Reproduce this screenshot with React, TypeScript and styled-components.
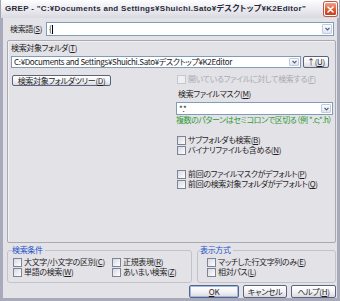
import React from "react";
import styled, { createGlobalStyle } from "styled-components";

const FONT = `"Noto Sans CJK JP", "Noto Sans", sans-serif`;

const Global = createGlobalStyle`
  html, body { margin: 0; padding: 0; background: #e3e2e7; }
  body { font-family: ${FONT}; font-size: 8px; line-height: 10px; color: #1e1e26; }
  * { box-sizing: border-box; }
`;

const Window = styled.div`
  width: 340px;
  height: 301px;
  display: flex;
  flex-direction: column;
  overflow: hidden;
  background: #e3e2e7;
  font-feature-settings: "palt" 1;
  letter-spacing: -0.35px;
`;

const TitleBar = styled.div`
  height: 18px;
  flex: none;
  display: flex;
  align-items: center;
  padding: 0 2px 0 4px;
  background: linear-gradient(#fdfdfe, #eeeef3 45%, #d9d9e1);
  border-left: 1px solid #a4a4b8;
  border-right: 1px solid #a4a4b8;
`;

const TitleText = styled.div`
  flex: 1;
  font-family: "Liberation Sans", "Noto Sans CJK JP", sans-serif;
  font-weight: bold;
  font-size: 8px;
  letter-spacing: 0.3px;
  color: #2a2a38;
  white-space: nowrap;
  overflow: hidden;
`;

const CloseButton = styled.div`
  width: 13px;
  height: 14px;
  flex: none;
  border-radius: 2px;
  border: 1px solid #fff;
  box-shadow: 0 0 0 1px #b85a4a;
  background: linear-gradient(#f2a28c, #dd5a34 55%, #c8401c);
  display: flex;
  align-items: center;
  justify-content: center;
`;

const Frame = styled.div`
  flex: 1;
  display: flex;
  flex-direction: column;
  border: 3px solid #a9a9bc;
  border-top: none;
  padding: 4px 1px 0 4px;
`;

const Acc = styled.span`
  text-decoration: underline;
  text-underline-offset: 1px;
`;

const SearchRow = styled.div`
  height: 14px;
  display: flex;
  align-items: center;
  padding-left: 3px;
`;

const SearchLabel = styled.div`
  width: 36px;
  flex: none;
  white-space: nowrap;
`;

const ComboBox = styled.div<{ $w: number; $h: number; $mt?: number }>`
  width: ${(p) => p.$w}px;
  height: ${(p) => p.$h}px;
  margin-top: ${(p) => p.$mt ?? 0}px;
  flex: none;
  display: flex;
  align-items: stretch;
  background: #fff;
  border: 1px solid #7f9db9;
`;

const ComboText = styled.div`
  flex: 1;
  display: flex;
  align-items: center;
  padding-left: 2px;
  white-space: nowrap;
  overflow: hidden;
  color: #1a1a22;
`;

const Caret = styled.span`
  display: inline-block;
  width: 1px;
  height: 9px;
  margin-left: 1px;
  background: #000;
`;

const DropButton = styled.div`
  width: 10px;
  margin: 1px;
  flex: none;
  border: 1px solid #c4cbdd;
  border-radius: 1px;
  background: linear-gradient(#fcfcfe, #e3e5ee);
  display: flex;
  align-items: center;
  justify-content: center;
`;

const Panel = styled.div`
  height: 203px;
  flex: none;
  margin-top: 4px;
  border: 1px solid #a9a9b5;
  border-radius: 2px;
  box-shadow: inset 1px 1px 0 #f1f1f4;
  padding: 2px 0 0 3px;
  display: flex;
  flex-direction: column;
`;

const TextLine = styled.div<{ $mt?: number; $pl?: number; $color?: string; $ls?: number }>`
  height: 10px;
  line-height: 10px;
  white-space: nowrap;
  margin-top: ${(p) => p.$mt ?? 0}px;
  padding-left: ${(p) => p.$pl ?? 0}px;
  color: ${(p) => p.$color ?? "inherit"};
  ${(p) => (p.$ls !== undefined ? `letter-spacing: ${p.$ls}px;` : "")}
`;

const FolderRow = styled.div`
  display: flex;
  align-items: center;
  gap: 2px;
  margin-top: 3px;
`;

const Button = styled.button<{ $w: number; $h: number; $default?: boolean; $ml?: number; $mt?: number }>`
  width: ${(p) => p.$w}px;
  height: ${(p) => p.$h}px;
  flex: none;
  margin: ${(p) => p.$mt ?? 0}px 0 0 ${(p) => p.$ml ?? 0}px;
  padding: 0;
  font-family: ${FONT};
  font-size: 8px;
  line-height: 1;
  letter-spacing: -0.35px;
  color: #1e1e26;
  font-feature-settings: "palt" 1;
  border: 1px solid #5a6480;
  border-radius: 2px;
  background: linear-gradient(#ffffff, #f2f2f5 55%, #d8d8e0);
  box-shadow: ${(p) => (p.$default ? "inset 0 0 0 1px #9cbaec" : "none")};
  display: flex;
  align-items: center;
  justify-content: center;
  white-space: nowrap;
`;

const Lower = styled.div`
  display: grid;
  grid-template-columns: 165px 157px;
  margin-top: 6px;
`;

const Column = styled.div`
  display: flex;
  flex-direction: column;
`;

const CheckRow = styled.div<{ $mt?: number; $ml?: number; $disabled?: boolean }>`
  height: 10px;
  line-height: 10px;
  display: flex;
  align-items: center;
  gap: 2px;
  white-space: nowrap;
  margin-top: ${(p) => p.$mt ?? 0}px;
  margin-left: ${(p) => p.$ml ?? 0}px;
  color: ${(p) => (p.$disabled ? "#a9a9b3" : "inherit")};
`;

const Box = styled.span<{ $disabled?: boolean }>`
  width: 9px;
  height: 9px;
  flex: none;
  border: 1px solid ${(p) => (p.$disabled ? "#c6c6ce" : "#7b8498")};
  background: ${(p) => (p.$disabled ? "#efeff2" : "linear-gradient(135deg, #d9d9e0, #ffffff)")};
`;

const GroupsRow = styled.div`
  display: flex;
  gap: 5px;
  margin-top: 2px;
`;

const Group = styled.fieldset<{ $w: number; $pl: number }>`
  margin: 0;
  min-width: 0;
  width: ${(p) => p.$w}px;
  flex: none;
  border: 1px solid #c2c2cb;
  border-radius: 3px;
  padding: 2px 0 5px ${(p) => p.$pl}px;
`;

const GroupTitle = styled.legend`
  padding: 0 2px 0 0;
  line-height: 10px;
  font-size: 8px;
  color: #1f52c8;
`;

const GroupGrid = styled.div<{ $cols: string; $ml: number }>`
  display: grid;
  grid-template-columns: ${(p) => p.$cols};
  margin-left: ${(p) => p.$ml}px;
`;

const ButtonRow = styled.div`
  display: flex;
  justify-content: flex-end;
  gap: 4px;
  margin-top: 2px;
`;

const Chevron = () => (
  <svg width="5" height="4" viewBox="0 0 5 4">
    <path d="M0.5 0.8 L2.5 2.8 L4.5 0.8" fill="none" stroke="#4a5b82" strokeWidth="1.2" />
  </svg>
);

const Check = ({ children, disabled, mt, ml }: { children: React.ReactNode; disabled?: boolean; mt?: number; ml?: number }) => (
  <CheckRow $disabled={disabled} $mt={mt} $ml={ml}>
    <Box $disabled={disabled} />
    <span>{children}</span>
  </CheckRow>
);

export default function App() {
  return (
    <>
      <Global />
      <Window>
        <TitleBar>
          <TitleText>GREP - "C:¥Documents and Settings¥Shuichi.Sato¥デスクトップ¥K2Editor"</TitleText>
          <CloseButton>
            <svg width="7" height="7" viewBox="0 0 7 7">
              <path d="M1 1 L6 6 M6 1 L1 6" stroke="#fff" strokeWidth="1.6" strokeLinecap="round" />
            </svg>
          </CloseButton>
        </TitleBar>
        <Frame>
          <SearchRow>
            <SearchLabel>
              検索語(<Acc>S</Acc>)
            </SearchLabel>
            <ComboBox $w={288} $h={14}>
              <ComboText>
                {"{"}
                <Caret />
              </ComboText>
              <DropButton>
                <Chevron />
              </DropButton>
            </ComboBox>
          </SearchRow>

          <Panel>
            <TextLine>
              検索対象フォルダ(<Acc>T</Acc>)
            </TextLine>
            <FolderRow>
              <ComboBox $w={290} $h={12}>
                <ComboText>C:¥Documents and Settings¥Shuichi.Sato¥デスクトップ¥K2Editor</ComboText>
                <DropButton>
                  <Chevron />
                </DropButton>
              </ComboBox>
              <Button $w={26} $h={12}>
                ↑(<Acc>U</Acc>)
              </Button>
            </FolderRow>
            <Lower>
              <Column>
                <Button $w={99} $h={11} $ml={1} $mt={1}>
                  検索対象フォルダツリー(<Acc>D</Acc>)
                </Button>
              </Column>
              <Column>
                <Check disabled ml={1}>
                  開いているファイルに対して検索する(<Acc>F</Acc>)
                </Check>
                <TextLine $mt={5} $pl={2}>
                  検索ファイルマスク(<Acc>M</Acc>)
                </TextLine>
                <ComboBox $w={157} $h={13} $mt={3}>
                  <ComboText>*.*</ComboText>
                  <DropButton>
                    <Chevron />
                  </DropButton>
                </ComboBox>
                <TextLine $color="#2f9a35" $ls={-0.45}>
                  複数のパターンはセミコロンで区切る（例 *.c;*.h）
                </TextLine>
                <Check mt={10} ml={1}>
                  サブフォルダも検索(<Acc>B</Acc>)
                </Check>
                <Check ml={1}>
                  バイナリファイルも含める(<Acc>N</Acc>)
                </Check>
                <Check mt={14} ml={1}>
                  前回のファイルマスクがデフォルト(<Acc>P</Acc>)
                </Check>
                <Check ml={1}>
                  前回の検索対象フォルダがデフォルト(<Acc>Q</Acc>)
                </Check>
              </Column>
            </Lower>
          </Panel>

          <GroupsRow>
            <Group $w={185} $pl={4}>
              <GroupTitle>検索条件</GroupTitle>
              <GroupGrid $cols="99px auto" $ml={1}>
                <Check>
                  大文字/小文字の区別(<Acc>C</Acc>)
                </Check>
                <Check>
                  正規表現(<Acc>R</Acc>)
                </Check>
                <Check>
                  単語の検索(<Acc>W</Acc>)
                </Check>
                <Check>
                  あいまい検索(<Acc>Z</Acc>)
                </Check>
              </GroupGrid>
            </Group>
            <Group $w={139} $pl={2}>
              <GroupTitle>表示方式</GroupTitle>
              <GroupGrid $cols="auto" $ml={7}>
                <Check>
                  マッチした行文字列のみ(<Acc>E</Acc>)
                </Check>
                <Check>
                  相対パス(<Acc>L</Acc>)
                </Check>
              </GroupGrid>
            </Group>
          </GroupsRow>

          <ButtonRow>
            <Button $w={50} $h={13} $default>
              <Acc>O</Acc>K
            </Button>
            <Button $w={44} $h={13}>
              キャンセル
            </Button>
            <Button $w={45} $h={13}>
              ヘルプ(<Acc>H</Acc>)
            </Button>
          </ButtonRow>
        </Frame>
      </Window>
    </>
  );
}
